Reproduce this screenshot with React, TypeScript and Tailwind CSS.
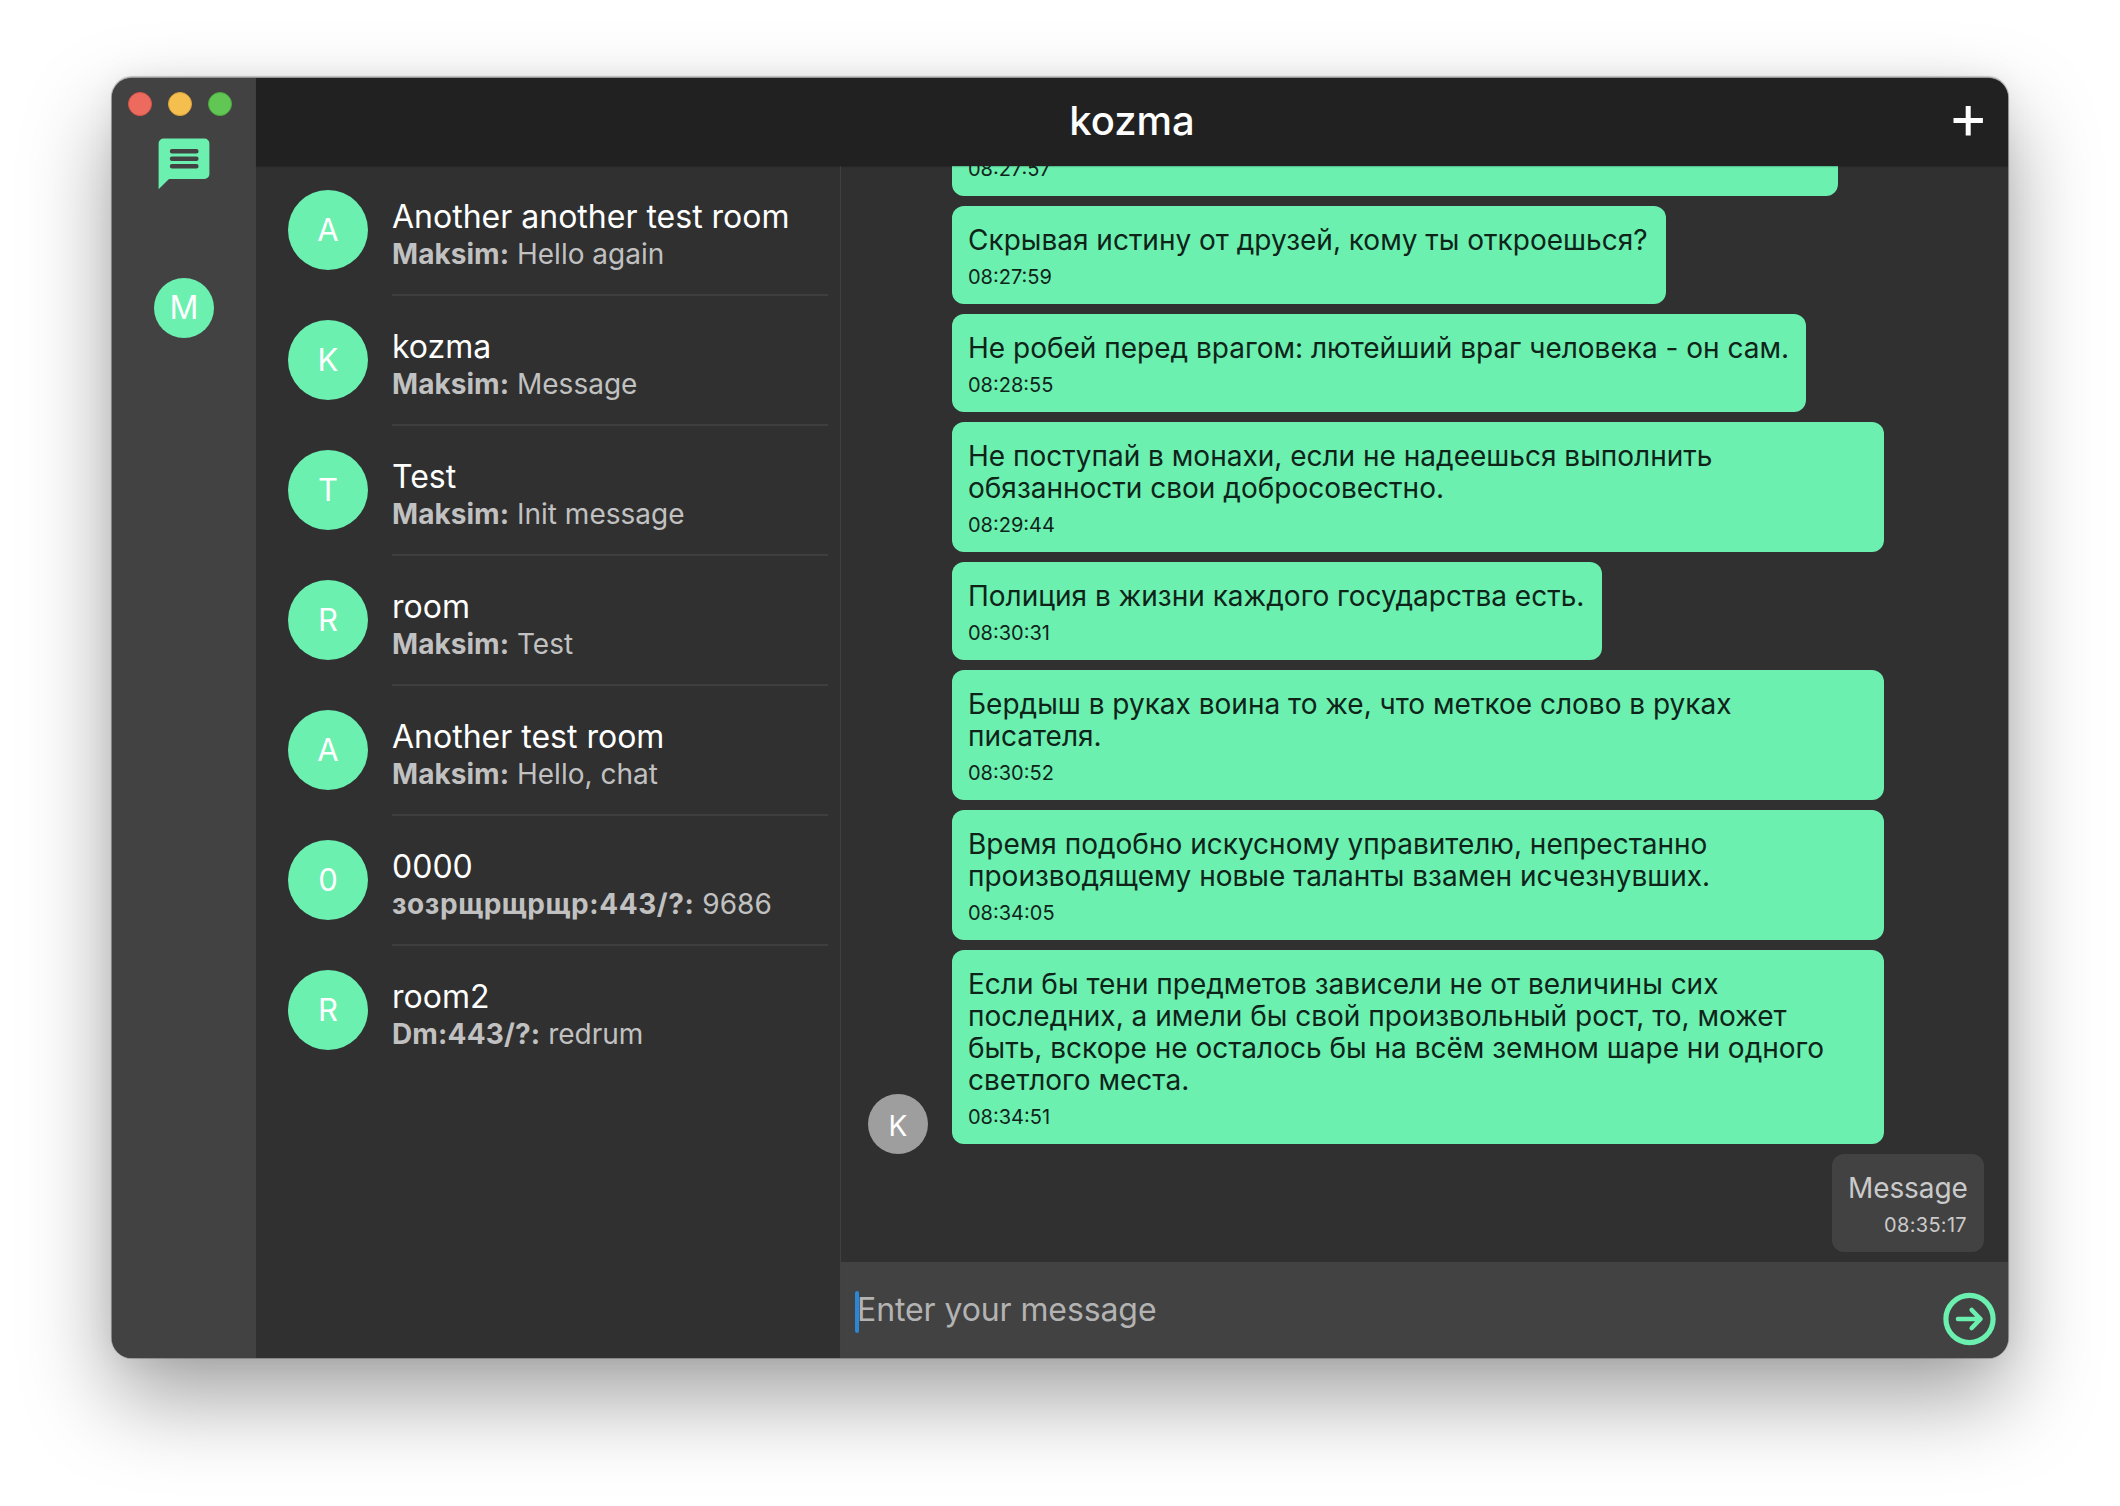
const rooms = [
  { initial: 'A', name: 'Another another test room', author: 'Maksim:', tracking: 'tracking-[0.05px]', text: 'Hello again' },
  { initial: 'K', name: 'kozma', author: 'Maksim:', tracking: 'tracking-[0.05px]', text: 'Message' },
  { initial: 'T', name: 'Test', author: 'Maksim:', tracking: 'tracking-[0.05px]', text: 'Init message' },
  { initial: 'R', name: 'room', author: 'Maksim:', tracking: 'tracking-[0.05px]', text: 'Test' },
  { initial: 'A', name: 'Another test room', author: 'Maksim:', tracking: 'tracking-[0.05px]', text: 'Hello, chat' },
  { initial: '0', name: '0000', author: 'зозрщрщрщр:443/?:', tracking: 'tracking-[0.58px]', text: '9686' },
  { initial: 'R', name: 'room2', author: 'Dm:443/?:', tracking: 'tracking-[0.15px]', text: 'redrum' },
];

const messages = [
  { width: 'w-[886px]', time: '08:27:57', lines: [] },
  { width: 'w-[714px]', time: '08:27:59', lines: ['Скрывая истину от друзей, кому ты откроешься?'] },
  { width: 'w-[854px]', time: '08:28:55', lines: ['Не робей перед врагом: лютейший враг человека - он сам.'] },
  { width: 'w-[932px]', time: '08:29:44', lines: ['Не поступай в монахи, если не надеешься выполнить', 'обязанности свои добросовестно.'] },
  { width: 'w-[650px]', time: '08:30:31', lines: ['Полиция в жизни каждого государства есть.'] },
  { width: 'w-[932px]', time: '08:30:52', lines: ['Бердыш в руках воина то же, что меткое слово в руках', 'писателя.'] },
  { width: 'w-[932px]', time: '08:34:05', lines: ['Время подобно искусному управителю, непрестанно', 'производящему новые таланты взамен исчезнувших.'] },
  {
    width: 'w-[932px]',
    time: '08:34:51',
    lines: [
      'Если бы тени предметов зависели не от величины сих',
      'последних, а имели бы свой произвольный рост, то, может',
      'быть, вскоре не осталось бы на всём земном шаре ни одного',
      'светлого места.',
    ],
  },
];

function ChatIcon() {
  return (
    <svg className="h-[52px] w-[52px]" viewBox="0 0 52 52">
      <path d="M5.6 0.5H46.4a5 5 0 0 1 5 5V36a5 5 0 0 1-5 5H11L0.6 51.2V5.5a5 5 0 0 1 5-5Z" fill="#6bf0b0" />
      <path d="M14 13.2H38.4M14 20.8H38.4M14 28.3H38.4" stroke="#424242" strokeWidth="4.4" strokeLinecap="round" />
    </svg>
  );
}

function SendIcon() {
  return (
    <svg className="h-[54px] w-[54px]" viewBox="0 0 54 54" fill="none" stroke="#6bf0b0">
      <circle cx="26.5" cy="27" r="23.6" strokeWidth="5.2" />
      <path d="M15 27H37M28.7 18L37.5 27L28.7 36" strokeWidth="4.6" strokeLinecap="round" strokeLinejoin="round" />
    </svg>
  );
}

export default function App() {
  return (
    <div className="h-[1506px] w-[2120px] overflow-hidden bg-white pl-[112px] pt-[78px] font-['Inter','Noto_Sans',sans-serif]">
      <div className="flex h-[1280px] w-[1896px] overflow-hidden rounded-[20px] bg-[#303030] shadow-[0_0_0_1px_rgba(0,0,0,0.2),0_-1px_1px_1px_rgba(0,0,0,0.2),0_0_30px_rgba(0,0,0,0.06),0_40px_88px_0_rgba(0,0,0,0.37)]">
        <nav className="flex w-36 shrink-0 flex-col items-center bg-[#424242]">
          <div className="mt-[14px] flex h-6 gap-4 self-start pl-4">
            <span className="h-6 w-6 rounded-full border border-[#d9554a] bg-[#ed6a5f]" />
            <span className="h-6 w-6 rounded-full border border-[#dba33c] bg-[#f5bf4f]" />
            <span className="h-6 w-6 rounded-full border border-[#4ba93c] bg-[#62c655]" />
          </div>
          <div className="mt-[22px]">
            <ChatIcon />
          </div>
          <div className="mt-[88px] flex h-[60px] w-[60px] items-center justify-center rounded-full bg-[#6bf0b0] text-[32px] text-white">
            M
          </div>
        </nav>

        <div className="flex min-w-0 flex-1 flex-col">
          <header className="relative z-10 flex h-[88px] shrink-0 items-center justify-center bg-[#212121] shadow-[0_1px_1px_rgba(0,0,0,0.2)]">
            <h1 className="pb-[3px] text-[40px] font-medium leading-none text-white">kozma</h1>
            <svg className="absolute right-[25px] top-7 h-[30px] w-[30px]" viewBox="0 0 30 30" stroke="white" strokeWidth="5">
              <path d="M15.2 0V29.4M0.5 14.6H29.9" />
            </svg>
          </header>

          <div className="flex min-h-0 flex-1">
            <aside className="flex w-[585px] shrink-0 flex-col border-r border-[#414141]">
              {rooms.map((room, i) => (
                <div key={i} className="flex h-[130px] gap-6 pl-8 pr-3">
                  <div className="mt-6 flex h-20 w-20 shrink-0 items-center justify-center rounded-full bg-[#6bf0b0] text-[31px] text-white">
                    {room.initial}
                  </div>
                  <div className={i < rooms.length - 1 ? 'flex-1 border-b-2 border-[#3e3e3e] pt-[33px]' : 'flex-1 pt-[33px]'}>
                    <div className="whitespace-nowrap text-[32px] leading-9 text-white">{room.name}</div>
                    <div className="whitespace-nowrap text-[28px] leading-[38px] text-[#c1c1c1]">
                      <b className={room.tracking}>{room.author}</b> {room.text}
                    </div>
                  </div>
                </div>
              ))}
            </aside>

            <main className="flex min-w-0 flex-1 flex-col">
              <div className="flex min-h-0 flex-1 flex-col justify-end gap-[10px] overflow-hidden pb-[10px]">
                {messages.map((m, i) => (
                  <div key={m.time} className="flex shrink-0 items-end pl-[27px]">
                    <div className="w-[84px] shrink-0">
                      {i === messages.length - 1 && (
                        <div className="-mb-[10px] flex h-[60px] w-[60px] items-center justify-center rounded-full bg-[#9e9e9e] pt-1 text-[28px] text-white">
                          K
                        </div>
                      )}
                    </div>
                    <div className={`${m.width} rounded-xl bg-[#6bf0b0] px-4 pb-[14px] pt-[18px] text-[#0f2419]`}>
                      {m.lines.map((line) => (
                        <p key={line} className="whitespace-nowrap text-[28px] leading-8">
                          {line}
                        </p>
                      ))}
                      <p className="mt-2 text-[20px] leading-[26px]">{m.time}</p>
                    </div>
                  </div>
                ))}
                <div className="mr-6 w-[152px] shrink-0 self-end rounded-xl bg-[#424242] pb-[14px] pl-4 pr-[17px] pt-[18px] text-right text-[#cacaca]">
                  <p className="text-[28px] leading-8 tracking-[-0.1px]">Message</p>
                  <p className="mt-2 text-[20px] leading-[26px] tracking-[0.3px]">08:35:17</p>
                </div>
              </div>

              <footer className="flex h-24 shrink-0 items-center bg-[#424242] pl-[14px] pr-[11px]">
                <span className="mt-1 h-[42px] w-1 rounded-sm bg-[#2b87d3]" />
                <span className="-ml-[2px] flex-1 text-[32px] tracking-[-0.1px] text-[#b3b3b3]">Enter your message</span>
                <div className="mt-[18px]">
                  <SendIcon />
                </div>
              </footer>
            </main>
          </div>
        </div>
      </div>
    </div>
  );
}
